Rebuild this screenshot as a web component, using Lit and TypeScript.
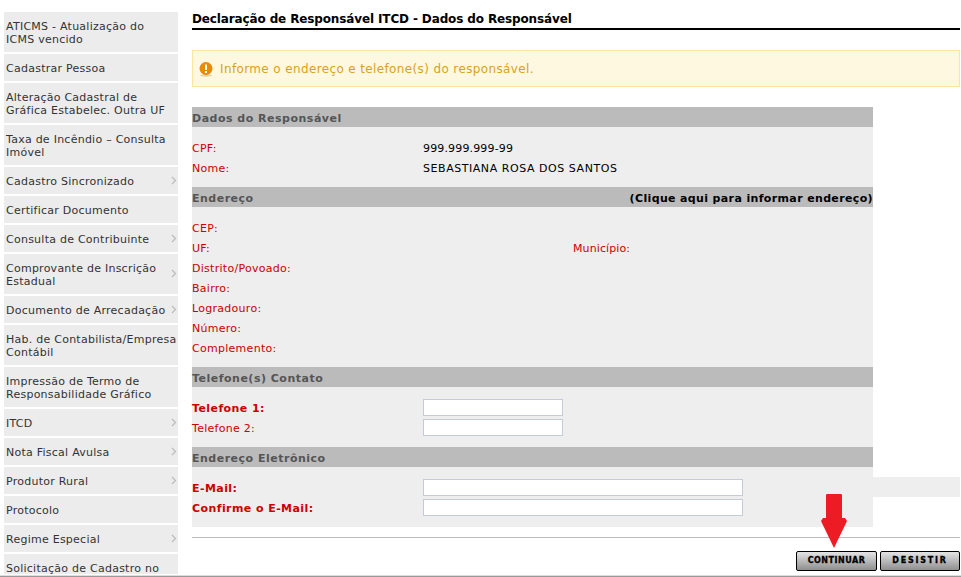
import { LitElement, html, css } from "lit";
import { customElement } from "lit/decorators.js";

const menu: [string, boolean][] = [
  ["ATICMS - Atualização do\nICMS vencido", false],
  ["Cadastrar Pessoa", false],
  ["Alteração Cadastral de\nGráfica Estabelec. Outra UF", false],
  ["Taxa de Incêndio – Consulta\nImóvel", false],
  ["Cadastro Sincronizado", true],
  ["Certificar Documento", false],
  ["Consulta de Contribuinte", true],
  ["Comprovante de Inscrição\nEstadual", true],
  ["Documento de Arrecadação", true],
  ["Hab. de Contabilista/Empresa\nContábil", false],
  ["Impressão de Termo de\nResponsabilidade Gráfico", false],
  ["ITCD", true],
  ["Nota Fiscal Avulsa", true],
  ["Produtor Rural", true],
  ["Protocolo", false],
  ["Regime Especial", true],
  ["Solicitação de Cadastro no\nSistema", false],
];

@customElement("app-root")
export class AppRoot extends LitElement {
  static styles = css`
    :host { display: block; width: 961px; height: 577px; overflow: hidden; background: #fff; font-family: "DejaVu Sans", Verdana, sans-serif; font-size: 11px; line-height: 13px; }
    .page { display: flex; height: 576px; border-bottom: 1px solid #999; box-shadow: inset 0 -1px 0 #ddd; overflow: hidden; box-sizing: content-box; }
    .side { width: 174px; height: 562px; overflow: hidden; margin-left: 4px; padding-top: 12px; display: flex; flex-direction: column; gap: 2px; flex: none; }
    .item { position: relative; background: #ececec; padding: 8px 0 6px 2px; color: #333; flex: none; white-space: pre-line; letter-spacing: 0.25px; }
    .chev { position: absolute; right: 1px; top: calc(50% - 5px); }
    .main { margin-left: 14px; width: 768px; flex: none; }
    h1 { margin: 0; padding-top: 12px; height: 16px; font-size: 12px; line-height: 14px; font-weight: bold; color: #000; border-bottom: 2px solid #000; box-sizing: content-box; letter-spacing: -0.13px; }
    .alert { margin-top: 20px; height: 35px; border: 1px solid #fbe6a0; background: #fff8e0; color: #d9a21b; display: flex; align-items: center; gap: 7px; padding-left: 6px; font-size: 12px; letter-spacing: 0.37px; }
    .alert span { padding-top: 2px; }
    .alert svg { margin-top: 2px; }
    .panel { margin-top: 20px; width: 681px; background: #eee; padding-bottom: 10px; }
    .hd { height: 20px; padding-top: 2px; box-sizing: border-box; background: #bbb; color: #555; font-weight: bold; line-height: 20px; display: flex; justify-content: space-between; letter-spacing: 0.5px; white-space: nowrap; }
    .hd span.r { color: #000; letter-spacing: 0.36px; }
    .rows { padding: 10px 0; }
    .rows.flush { padding-bottom: 0; }
    .row { height: 20px; display: flex; align-items: center; color: #c00; letter-spacing: 0.28px; }
    .row > span { padding-top: 2px; }
    .row .l { width: 231px; flex: none; }
    .row .v { color: #000; }
    .row .cpf { letter-spacing: 0.15px; }
    .row .name { letter-spacing: 0.55px; }
    .row .mun { letter-spacing: 0.1px; }
    .row .l.b { font-weight: bold; letter-spacing: 0.42px; }
    .row .m { width: 150px; flex: none; }
    .row input { box-sizing: border-box; height: 17px; border: 1px solid #c3ccd6; background: #fff; padding: 0; margin: 0; display: block; }
    .t { width: 140px; }
    .e { width: 320px; }
    .mailrow { width: 768px; background: #eee; }
    hr { margin: 10px 0 0; border: 0; height: 1px; background: #bbb; width: 768px; }
    .btns { display: flex; justify-content: flex-end; gap: 3px; margin-top: 13px; position: relative; }
    .btn { box-sizing: border-box; width: 80px; height: 20px; border: 1px solid #000; border-radius: 2px; background: linear-gradient(#e4e4e4, #8f8f8f); color: #000; font-family: "DejaVu Sans", sans-serif; font-weight: bold; font-size: 8px; -webkit-text-stroke: 0.3px #000; text-align: center; line-height: 18px; padding: 0; }
    .btn.go { width: 81px; letter-spacing: 0.5px; }
    .btn.no { letter-spacing: 1.8px; }
    .arrow { position: absolute; left: 629px; top: -57px; }
  `;

  private chev() {
    return html`<svg class="chev" width="6" height="9" viewBox="0 0 6 9"><path d="M1 1l3.5 3.5L1 8" fill="none" stroke="#bbb" stroke-width="1.2"/></svg>`;
  }

  render() {
    return html`<div class="page">
      <nav class="side">
        ${menu.map(([t, c]) => html`<div class="item">${t}${c ? this.chev() : ""}</div>`)}
      </nav>
      <main class="main">
        <h1>Declaração de Responsável ITCD - Dados do Responsável</h1>
        <div class="alert">
          <svg width="14" height="15" viewBox="0 0 14 15"><ellipse cx="7" cy="13.5" rx="6" ry="1.2" fill="#e6cfa0"/><circle cx="7" cy="6.5" r="6.5" fill="#e88a0c"/><rect x="6" y="2.5" width="2" height="5.5" fill="#fff"/><rect x="6" y="9" width="2" height="2" fill="#fff"/></svg>
          <span>Informe o endereço e telefone(s) do responsável.</span>
        </div>
        <div class="panel">
          <div class="hd"><span>Dados do Responsável</span></div>
          <div class="rows">
            <div class="row"><span class="l">CPF:</span><span class="v cpf">999.999.999-99</span></div>
            <div class="row"><span class="l">Nome:</span><span class="v name">SEBASTIANA ROSA DOS SANTOS</span></div>
          </div>
          <div class="hd"><span>Endereço</span><span class="r">(Clique aqui para informar endereço)</span></div>
          <div class="rows">
            <div class="row"><span class="l">CEP:</span></div>
            <div class="row"><span class="l">UF:</span><span class="m"></span><span class="mun">Município:</span></div>
            <div class="row"><span class="l">Distrito/Povoado:</span></div>
            <div class="row"><span class="l">Bairro:</span></div>
            <div class="row"><span class="l">Logradouro:</span></div>
            <div class="row"><span class="l">Número:</span></div>
            <div class="row"><span class="l">Complemento:</span></div>
          </div>
          <div class="hd"><span>Telefone(s) Contato</span></div>
          <div class="rows">
            <div class="row"><span class="l b">Telefone 1:</span><input class="t" /></div>
            <div class="row"><span class="l">Telefone 2:</span><input class="t" /></div>
          </div>
          <div class="hd"><span>Endereço Eletrônico</span></div>
          <div class="rows flush">
            <div class="row mailrow"><span class="l b">E-Mail:</span><input class="e" /></div>
            <div class="row"><span class="l b">Confirme o E-Mail:</span><input class="e" /></div>
          </div>
        </div>
        <hr />
        <div class="btns">
          <svg class="arrow" width="26" height="54" viewBox="0 0 26 54"><path d="M5 1q0-1 1-1h14q1 0 1 1v23h3l2 3-13 27L0 27l2-3h3z" fill="#ed1c24"/></svg>
          <button class="btn go">CONTINUAR</button>
          <button class="btn no">DESISTIR</button>
        </div>
      </main>
    </div>`;
  }
}
